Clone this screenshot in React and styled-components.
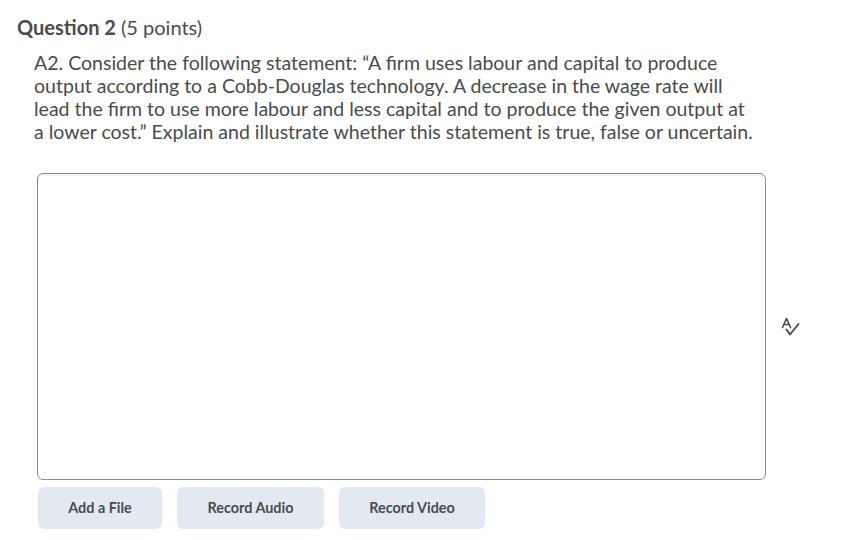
import React from "react";
import styled, { createGlobalStyle } from "styled-components";

const Global = createGlobalStyle`
  html, body {
    margin: 0;
    background: #fff;
  }
  body {
    font-family: "Lato", "Noto Sans", sans-serif;
    color: #494c4e;
    text-rendering: optimizeLegibility;
  }
`;

const Page = styled.div`
  width: 847px;
  height: 540px;
  overflow: hidden;
  padding: 15px 0 0 17px;
  box-sizing: border-box;
`;

const Heading = styled.h2`
  margin: 0;
  font-size: 20px;
  line-height: 24px;
  font-weight: 400;
`;

const Strong = styled.strong`
  font-weight: 700;
`;

const Prompt = styled.p`
  margin: 12px 0 0 17px;
  width: 724px;
  font-size: 19.52px;
  line-height: 23px;
`;

const AnswerRow = styled.div`
  display: flex;
  align-items: center;
  margin: 30px 0 0 20px;
`;

const Answer = styled.div`
  width: 729px;
  height: 307px;
  box-sizing: border-box;
  border: 1px solid #868c90;
  border-radius: 6px;
  background: #fff;
  box-shadow: inset 0 2px 0 0 #f1f3f5;
`;

const SpellCheck = styled.button`
  display: flex;
  padding: 0;
  margin-left: 15px;
  border: 0;
  background: none;
  color: #494c4e;
`;

const Actions = styled.div`
  display: flex;
  gap: 15px;
  margin: 7px 0 0 21px;
`;

const Action = styled.button`
  width: ${(props) => props.$width}px;
  height: 42px;
  padding: 0 0 2px;
  border: 0;
  border-radius: 6px;
  background: #e3e9f1;
  color: #494c4e;
  font-family: inherit;
  font-size: 14.4px;
  font-weight: 700;
`;

function SpellIcon() {
  return (
    <svg width="20" height="20" viewBox="0 0 20 20" fill="none" stroke="currentColor" strokeLinecap="round" strokeLinejoin="round">
      <path d="M1.5 10.5 L5.5 1.5 L9.5 10.5 M3 7.5 H8" strokeWidth="1.6" />
      <path d="M5.5 12.5 L9 17.5 L17.5 7" strokeWidth="1.9" />
    </svg>
  );
}

export default function App() {
  return (
    <Page>
      <Global />
      <Heading>
        <Strong>Question 2</Strong> (5 points)
      </Heading>
      <Prompt>
        A2. Consider the following statement: “A firm uses labour and capital to produce output according to a Cobb-Douglas technology. A decrease in the wage rate will lead the firm to use more labour and less capital and to produce the given output at a lower cost.” Explain and illustrate whether this statement is true, false or uncertain.
      </Prompt>
      <AnswerRow>
        <Answer />
        <SpellCheck aria-label="Check spelling">
          <SpellIcon />
        </SpellCheck>
      </AnswerRow>
      <Actions>
        <Action $width={124}>Add a File</Action>
        <Action $width={147}>Record Audio</Action>
        <Action $width={146}>Record Video</Action>
      </Actions>
    </Page>
  );
}
